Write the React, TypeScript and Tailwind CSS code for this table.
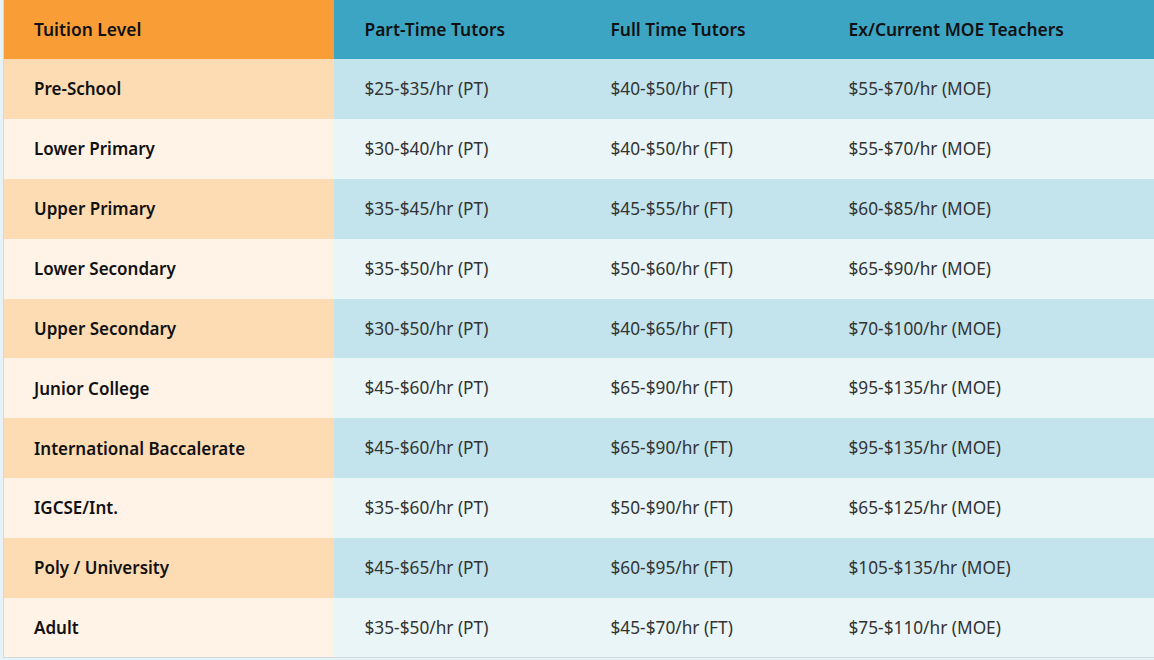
const rows: [string, string, string, string][] = [
  ["Pre-School", "$25-$35/hr (PT)", "$40-$50/hr (FT)", "$55-$70/hr (MOE)"],
  ["Lower Primary", "$30-$40/hr (PT)", "$40-$50/hr (FT)", "$55-$70/hr (MOE)"],
  ["Upper Primary", "$35-$45/hr (PT)", "$45-$55/hr (FT)", "$60-$85/hr (MOE)"],
  ["Lower Secondary", "$35-$50/hr (PT)", "$50-$60/hr (FT)", "$65-$90/hr (MOE)"],
  ["Upper Secondary", "$30-$50/hr (PT)", "$40-$65/hr (FT)", "$70-$100/hr (MOE)"],
  ["Junior College", "$45-$60/hr (PT)", "$65-$90/hr (FT)", "$95-$135/hr (MOE)"],
  ["International Baccalerate", "$45-$60/hr (PT)", "$65-$90/hr (FT)", "$95-$135/hr (MOE)"],
  ["IGCSE/Int.", "$35-$60/hr (PT)", "$50-$90/hr (FT)", "$65-$125/hr (MOE)"],
  ["Poly / University", "$45-$65/hr (PT)", "$60-$95/hr (FT)", "$105-$135/hr (MOE)"],
  ["Adult", "$35-$50/hr (PT)", "$45-$70/hr (FT)", "$75-$110/hr (MOE)"],
];

export default function App() {
  return (
    <div
      className="h-[660px] w-full overflow-hidden bg-[#e6f2f6] pl-[3px]"
      style={{ fontFamily: '"Noto Sans", "Open Sans", sans-serif' }}
    >
      <table className="w-[1170px] table-fixed border-collapse border-l border-b border-[#d3dadd] text-[17.25px]">
        <colgroup>
          <col className="w-[330px]" />
          <col className="w-[246px]" />
          <col className="w-[238px]" />
          <col />
        </colgroup>
        <thead>
          <tr className="h-[59px] text-left text-[17.4px] text-[#111]">
            <th className="bg-[#f99e36] pl-[30px] font-semibold">Tuition Level</th>
            <th className="bg-[#3ca5c4] pl-[31px] font-semibold">Part-Time Tutors</th>
            <th className="bg-[#3ca5c4] pl-[31px] font-semibold">Full Time Tutors</th>
            <th className="bg-[#3ca5c4] pl-[31px] font-semibold">Ex/Current MOE Teachers</th>
          </tr>
        </thead>
        <tbody>
          {rows.map((r, i) => {
            const odd = i % 2 === 0;
            return (
              <tr key={r[0]} className="h-[59.9px] text-[#333]">
                <td className={`pl-[30px] text-[17px] font-semibold text-[#111] ${odd ? "bg-[#fddcb3]" : "bg-[#fff2e7]"}`}>
                  {r[0]}
                </td>
                {r.slice(1).map((c) => (
                  <td key={c} className={`pl-[31px] ${odd ? "bg-[#c3e4ed]" : "bg-[#eaf5f7]"}`}>
                    {c}
                  </td>
                ))}
              </tr>
            );
          })}
        </tbody>
      </table>
    </div>
  );
}
